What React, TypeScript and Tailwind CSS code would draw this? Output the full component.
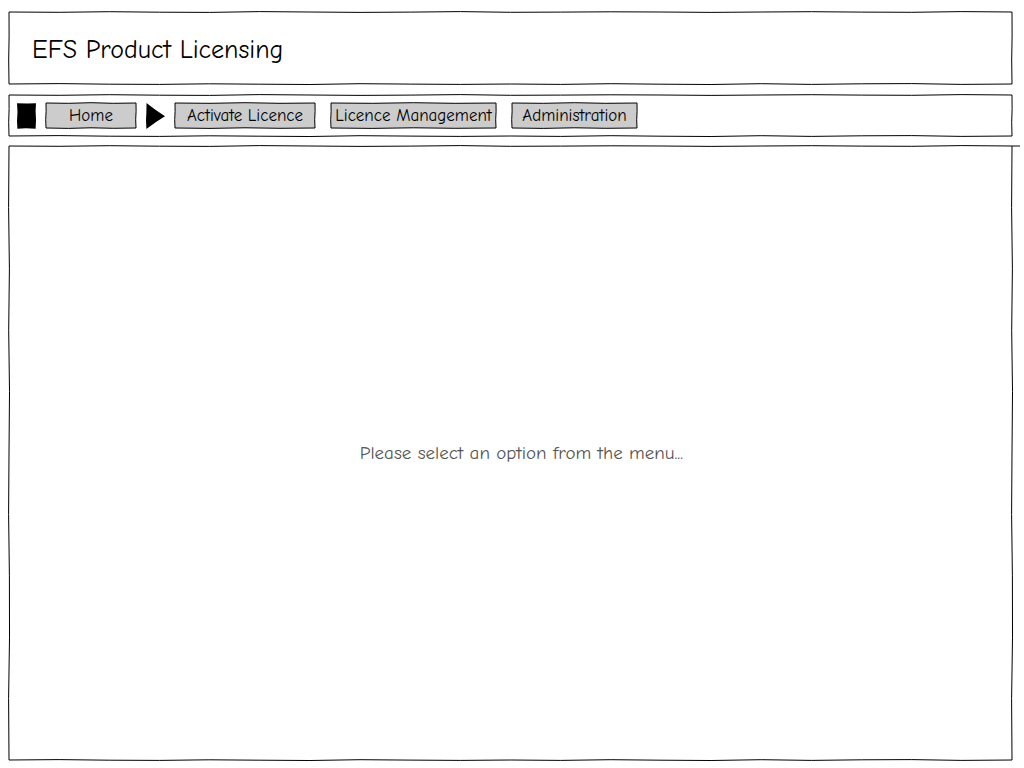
import type { ReactNode } from "react";

type EdgeProps = { points: number[]; side: "top" | "bottom" | "left" | "right"; overshoot?: boolean };

const edgeClass = {
  top: "absolute -top-[2px] left-0 h-[4px] w-full",
  bottom: "absolute -bottom-[2px] left-0 h-[4px] w-full",
  left: "absolute top-0 -left-[2px] h-full w-[4px]",
  right: "absolute top-0 -right-[2px] h-full w-[4px]",
};

/* A pen stroke that wavers slightly around one edge of its parent. */
function Edge({ points, side, overshoot = false }: EdgeProps) {
  const horizontal = side === "top" || side === "bottom";
  const step = 1000 / (points.length - 1);
  const at = (i: number) => {
    const along = Math.round(i * step);
    const across = 2 + points[i];
    return horizontal ? `${along} ${across}` : `${across} ${along}`;
  };
  const d = "M" + points.map((_, i) => at(i)).join(" L") + (overshoot ? " L1008 2" : "");
  return (
    <svg
      aria-hidden="true"
      className={`pointer-events-none overflow-visible ${edgeClass[side]}`}
      viewBox={horizontal ? "0 0 1000 4" : "0 0 4 1000"}
      preserveAspectRatio="none"
    >
      <path d={d} fill="none" stroke="#000" strokeWidth="1" vectorEffect="non-scaling-stroke" />
    </svg>
  );
}

const waveA = [0, 0.3, -0.3, 0.2, 0.4, -0.4, 0, 0.4, 0.1, -0.4, 0.3, 0.1, -0.2, 0, 0.4, 0, -0.3, 0.1, 0.3, -0.4, 0];
const waveB = [0, -0.4, 0.2, 0.4, -0.2, 0.2, 0.5, -0.3, 0.1, 0.4, 0, 0.4, -0.3, 0.2, 0.5, -0.3, 0.4, -0.2, -0.4, 0.4, 0];
const waveShort = [0, 0.3, -0.3, 0.3, 0];
const waveTall = [0, -0.4, 0.4, -0.3, 0.5, 0, -0.4, 0.4, 0.5, -0.4, 0];

function SketchEdges({ size, overshoot }: { size: "small" | "wide" | "large"; overshoot?: boolean }) {
  const small = size === "small";
  const across = small ? waveShort : waveA;
  const down = size === "large" ? waveTall : [0, 0.1, -0.3, 0];
  return (
    <>
      <Edge side="top" points={across} overshoot={overshoot} />
      <Edge side="bottom" points={small ? [0, 0.4, -0.2, 0.3, 0] : waveB} />
      <Edge side="left" points={down} />
      <Edge side="right" points={down} />
    </>
  );
}

function MenuButton({ children, width }: { children: ReactNode; width: string }) {
  return (
    <button
      type="button"
      className={`relative flex h-[25px] items-center justify-center bg-[#cccccc] text-[17px] leading-6 font-medium whitespace-nowrap text-black ${width}`}
    >
      {children}
      <SketchEdges size="small" />
    </button>
  );
}

export default function App() {
  return (
    <div className="flex min-h-screen flex-col bg-white pt-3 pr-3 pb-2 pl-[9px] font-['Comic_Sans_MS','Comic_Neue','Open_Sans',sans-serif] text-black">
      <header className="relative flex h-[72px] items-center px-[23px] pt-[3px]">
        <h1 className="text-[26px] leading-8 font-medium">EFS Product Licensing</h1>
        <SketchEdges size="wide" />
      </header>

      <nav className="relative mt-[11px] flex h-[41px] items-center gap-4 px-2">
        <div className="flex items-center gap-[10px]">
          <svg aria-hidden="true" width="19" height="26" viewBox="0 0 19 26">
            <path d="M0 0.3 L10 0.6 L19 0.2 L18.6 8 L19 17 L18.6 25.7 L9 25.3 L0.4 25.8 L0 18 L0.5 9 Z" />
          </svg>
          <MenuButton width="min-w-[90px]">Home</MenuButton>
          <svg aria-hidden="true" width="19" height="26" viewBox="0 0 19 26">
            <path d="M0.5 0 L9 6.5 L19 13.2 L10 19 L0.4 26 L0 17 L0.4 9 Z" />
          </svg>
          <MenuButton width="min-w-[140px]">Activate Licence</MenuButton>
        </div>
        <MenuButton width="min-w-[165px]">Licence Management</MenuButton>
        <MenuButton width="min-w-[125px]">Administration</MenuButton>
        <SketchEdges size="wide" />
      </nav>

      <main className="relative mt-[10px] flex flex-1 items-center justify-center pl-[22px]">
        <p className="text-[19px] leading-6 font-medium text-[#555555]">Please select an option from the menu...</p>
        <SketchEdges size="large" overshoot />
      </main>
    </div>
  );
}
